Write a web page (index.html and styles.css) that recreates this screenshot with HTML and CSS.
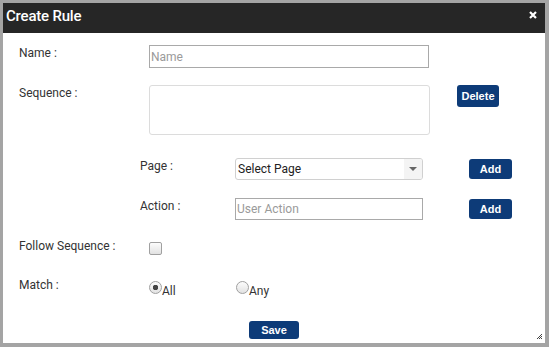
FILE: index.html
```html
<!DOCTYPE html>
<html>
<head>
<meta charset="utf-8">
<title>Create Rule</title>
<link rel="stylesheet" href="styles.css">
</head>
<body>
<div class="dialog">
  <div class="dialog-header">
    <span class="dialog-title">Create Rule</span>
    <svg class="close" width="8" height="8" viewBox="0 0 8 8"><path d="M1 1L7 7M7 1L1 7" stroke="#fff" stroke-width="2.2"/></svg>
  </div>

  <div class="form">
    <div class="row row-name">
      <label class="lbl lbl-main">Name :</label>
      <input type="text" class="txt txt-name" placeholder="Name">
    </div>

    <div class="row row-seq">
      <label class="lbl lbl-main">Sequence :</label>
      <textarea class="seq"></textarea>
      <button class="btn btn-delete">Delete</button>
    </div>

    <div class="row row-sub row-page">
      <label class="lbl lbl-sub">Page :</label>
      <div class="select">
        <span class="select-text">Select Page</span>
        <span class="select-arrow"></span>
      </div>
      <button class="btn btn-add">Add</button>
    </div>

    <div class="row row-sub row-action">
      <label class="lbl lbl-sub">Action :</label>
      <input type="text" class="txt txt-action" placeholder="User Action">
      <button class="btn btn-add">Add</button>
    </div>

    <div class="row row-follow">
      <label class="lbl lbl-main">Follow Sequence :</label>
      <input type="checkbox" class="check">
    </div>

    <div class="row row-match">
      <label class="lbl lbl-main">Match :</label>
      <div class="radio-group">
        <input type="radio" name="match" class="radio" checked><span class="radio-text">All</span>
      </div>
      <div class="radio-group">
        <input type="radio" name="match" class="radio"><span class="radio-text">Any</span>
      </div>
    </div>

    <div class="save-row">
      <button class="btn btn-save">Save</button>
    </div>
  </div>

  <svg class="grip" width="7" height="7" viewBox="0 0 7 7">
    <path d="M6 1L1 6M6 3L3 6M6 5L5 6" stroke="#444" stroke-width="1"/>
  </svg>
</div>
</body>
</html>
```

FILE: styles.css
```css
body {
  margin: 0;
  background: #a4a4a4;
  font-family: Roboto, "Liberation Sans", sans-serif;
}

.dialog {
  position: relative;
  margin: 3px 4px 0 3px;
  height: 340px;
  background: #fff;
}

/* title bar */
.dialog-header {
  height: 30px;
  background: #262626;
  display: flex;
  align-items: center;
  justify-content: space-between;
  padding: 0 8px 0 3px;
}

.dialog-title {
  color: #fff;
  font-size: 15px;
  font-weight: 500;
  letter-spacing: -0.2px;
  margin-top: -4px;
}

.close {
  margin-top: -7px;
}

.form {
  padding-left: 16px;
}

.row {
  display: flex;
  align-items: flex-start;
}

.lbl {
  font-size: 12px;
  line-height: 14px;
  color: #333;
}

.lbl-main { width: 130px; }
.lbl-sub { width: 95px; }

.row-name { margin-top: 12px; }
.row-seq { margin-top: 17px; }
.row-sub { padding-left: 121px; }
.row-page { margin-top: 23px; }
.row-action { margin-top: 18px; }
.row-follow { margin-top: 19px; }
.row-match { margin-top: 23px; }

.row-name .lbl, .row-seq .lbl, .row-sub .lbl { margin-top: 1px; }

.txt {
  box-sizing: border-box;
  height: 23px;
  border: 1px solid #a9a9a9;
  padding: 0 1px;
  font-family: Roboto, sans-serif;
  font-size: 12px;
  color: #333;
  outline: none;
}

.txt::placeholder { color: #9a9a9a; }

.txt-name { width: 280px; }
.txt-action { width: 188px; height: 22px; }

.seq {
  box-sizing: border-box;
  width: 281px;
  height: 50px;
  border: 1px solid #dcdcdc;
  border-radius: 3px;
  resize: none;
  margin: 0;
}

.select {
  box-sizing: border-box;
  width: 188px;
  height: 22px;
  border: 1px solid #d0d0d0;
  border-radius: 3px;
  display: flex;
  align-items: center;
  overflow: hidden;
}

.select-text {
  flex: 1;
  padding-left: 2px;
  font-size: 12px;
  color: #222;
}

.select-arrow {
  width: 18px;
  height: 100%;
  background: #f4f4f4;
  display: flex;
  align-items: center;
  justify-content: center;
}

.select-arrow::after {
  content: "";
  border-left: 4px solid transparent;
  border-right: 4px solid transparent;
  border-top: 4px solid #666;
}

.btn {
  background: #0d3b78;
  color: #fff;
  border: none;
  border-radius: 3px;
  font-family: "Liberation Sans", Arial, sans-serif;
  font-weight: bold;
  font-size: 11px;
  padding: 0;
  cursor: pointer;
}

.btn-delete {
  width: 42px;
  height: 22px;
  margin-left: 27px;
}

.btn-add {
  width: 43px;
  height: 20px;
  margin-left: 46px;
  margin-top: 1px;
}

.check {
  -webkit-appearance: none;
  appearance: none;
  box-sizing: border-box;
  width: 13px;
  height: 13px;
  margin: 3px 0 0;
  border: 1px solid #a0a0a0;
  border-radius: 2px;
  background: linear-gradient(#fcfcfc, #e2e2e2);
}

.radio-group {
  display: flex;
  align-items: flex-start;
  width: 87px;
}

.radio {
  -webkit-appearance: none;
  appearance: none;
  box-sizing: border-box;
  width: 13px;
  height: 13px;
  margin: 3px 0 0;
  border: 1px solid #a0a0a0;
  border-radius: 50%;
  background: linear-gradient(#fcfcfc, #e2e2e2);
}

.radio:checked {
  background: radial-gradient(circle, #444 0 2.5px, transparent 3px), linear-gradient(#fcfcfc, #e2e2e2);
}

.radio-text {
  font-size: 12px;
  color: #333;
  margin-top: 7px;
  line-height: 12px;
}

.save-row {
  display: flex;
  justify-content: center;
  margin-top: 24px;
  margin-left: -16px;
}

.btn-save {
  width: 50px;
  height: 18px;
}

.grip {
  position: absolute;
  right: 2px;
  bottom: 3px;
}
```
